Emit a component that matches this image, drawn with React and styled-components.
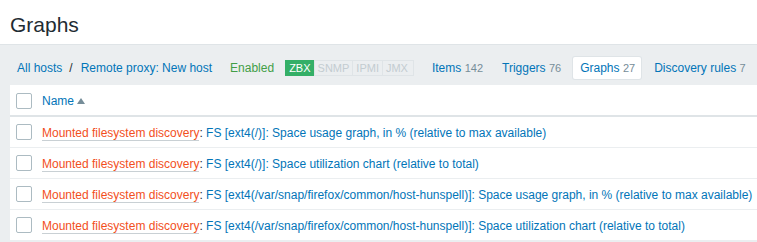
import styled, { createGlobalStyle } from "styled-components";

const GlobalStyle = createGlobalStyle`
  html, body {
    margin: 0;
    padding: 0;
    background: #ebeef0;
    font-family: "Liberation Sans", Arial, sans-serif;
    font-size: 12px;
    color: #1f2c33;
    overflow: hidden;
  }
`;

const rows = [
  "FS [ext4(/)]: Space usage graph, in % (relative to max available)",
  "FS [ext4(/)]: Space utilization chart (relative to total)",
  "FS [ext4(/var/snap/firefox/common/host-hunspell)]: Space usage graph, in % (relative to max available)",
  "FS [ext4(/var/snap/firefox/common/host-hunspell)]: Space utilization chart (relative to total)",
];

const statuses = [
  { label: "ZBX", on: true },
  { label: "SNMP" },
  { label: "IPMI" },
  { label: "JMX" },
];

const tabs = [
  { label: "Items", count: 142 },
  { label: "Triggers", count: 76 },
  { label: "Graphs", count: 27, active: true },
  { label: "Discovery rules", count: 7 },
];

function App() {
  return (
    <Page>
      <GlobalStyle />
      <Header>
        <Title>Graphs</Title>
      </Header>

      <Main>
        <Nav>
          <Crumbs>
            <Link>All hosts</Link>
            <Sep>/</Sep>
            <Link>Remote proxy: New host</Link>
          </Crumbs>
          <Enabled>Enabled</Enabled>
          <Statuses>
            {statuses.map((s) => (
              <Status key={s.label} $on={s.on}>
                {s.label}
              </Status>
            ))}
          </Statuses>
          <Tabs>
            {tabs.map((t) => (
              <Tab key={t.label} $active={t.active}>
                {t.label} <Count>{t.count}</Count>
              </Tab>
            ))}
          </Tabs>
        </Nav>

        <Table>
          <thead>
            <tr>
              <CheckCell as="th">
                <Checkbox />
              </CheckCell>
              <HeadCell>
                <Link>Name</Link>
                <SortArrow />
              </HeadCell>
            </tr>
          </thead>
          <tbody>
            {rows.map((r) => (
              <Row key={r}>
                <CheckCell>
                  <Checkbox />
                </CheckCell>
                <NameCell>
                  <Parent>Mounted filesystem discovery</Parent>
                  <Colon>: </Colon>
                  <Link>{r}</Link>
                </NameCell>
              </Row>
            ))}
          </tbody>
        </Table>
      </Main>
    </Page>
  );
}

const Page = styled.div`
  width: 100%;
  min-height: 242px;
`;

const Header = styled.header`
  background: #fff;
  padding: 13px 10px 7px;
  border-bottom: 1px solid #dfe4e7;
`;

const Title = styled.h1`
  margin: 0;
  font-size: 21px;
  line-height: 24px;
  font-weight: normal;
  color: #1f2c33;
`;

const Main = styled.main`
  padding-left: 10px;
`;

const Nav = styled.nav`
  display: flex;
  align-items: center;
  height: 22px;
  padding: 12px 0 6px 7px;
  white-space: nowrap;
`;

const Crumbs = styled.div`
  display: flex;
  align-items: center;
`;

const Link = styled.span`
  color: #0275b8;
  cursor: pointer;
`;

const Sep = styled.span`
  color: #1f2c33;
  margin: 0 8px 0 7px;
`;

const Enabled = styled.span`
  color: #429e47;
  margin-left: 18px;
`;

const Statuses = styled.div`
  display: flex;
  margin-left: 12px;
`;

const Status = styled.span`
  font-size: 11px;
  line-height: 14px;
  padding: 0 3px;
  border: 1px solid ${(p) => (p.$on ? "#34af67" : "#dfe4e7")};
  margin-left: -1px;
  background: ${(p) => (p.$on ? "#34af67" : "transparent")};
  color: ${(p) => (p.$on ? "#fff" : "#c3ccd1")};

  &:last-child {
    padding-right: 5px;
  }
`;

const Tabs = styled.div`
  display: flex;
  align-items: center;
  margin-left: 11px;
`;

const Tab = styled.span`
  color: #0275b8;
  height: 22px;
  line-height: 22px;
  padding: 0 6px 0 7px;
  margin-right: 6px;
  background: ${(p) => (p.$active ? "#fff" : "transparent")};
  border-radius: 2px;
  box-shadow: ${(p) => (p.$active ? "0 0 0 1px #dfe4e7" : "none")};
`;

const Count = styled.span`
  color: #768d99;
  font-size: 11px;
`;

const Table = styled.table`
  background: #fff;
  border-collapse: collapse;
  width: calc(100% + 10px);
  white-space: nowrap;

  th, td {
    text-align: left;
    font-weight: normal;
  }
`;

const CheckCell = styled.td`
  width: 16px;
  padding: 7px 5px 6px 6px;
  vertical-align: middle;
`;

const HeadCell = styled.th`
  height: 18px;
  padding: 7px 5px 5px;
  border-bottom: 2px solid #dfe4e7;
`;

const Checkbox = styled.span`
  display: block;
  box-sizing: border-box;
  width: 16px;
  height: 16px;
  border: 1px solid #acbbc2;
  border-radius: 2px;
  background: #fff;
`;

const SortArrow = styled.span`
  display: inline-block;
  width: 0;
  height: 0;
  margin-left: 3px;
  vertical-align: 1px;
  border-left: 4px solid transparent;
  border-right: 4px solid transparent;
  border-bottom: 6px solid #768d99;
`;

const Row = styled.tr`
  height: 31px;
  border-top: 1px solid #ebeef0;

  thead + tbody &:first-child {
    border-top: 2px solid #dfe4e7;
  }
`;

const NameCell = styled.td`
  padding: 7px 5px 5px;
`;

const Parent = styled.span`
  color: #f24f1d;
  border-bottom: 1px solid #c9d0d4;
`;

const Colon = styled.span`
  color: #1f2c33;
  white-space: pre;
`;

export default App;
